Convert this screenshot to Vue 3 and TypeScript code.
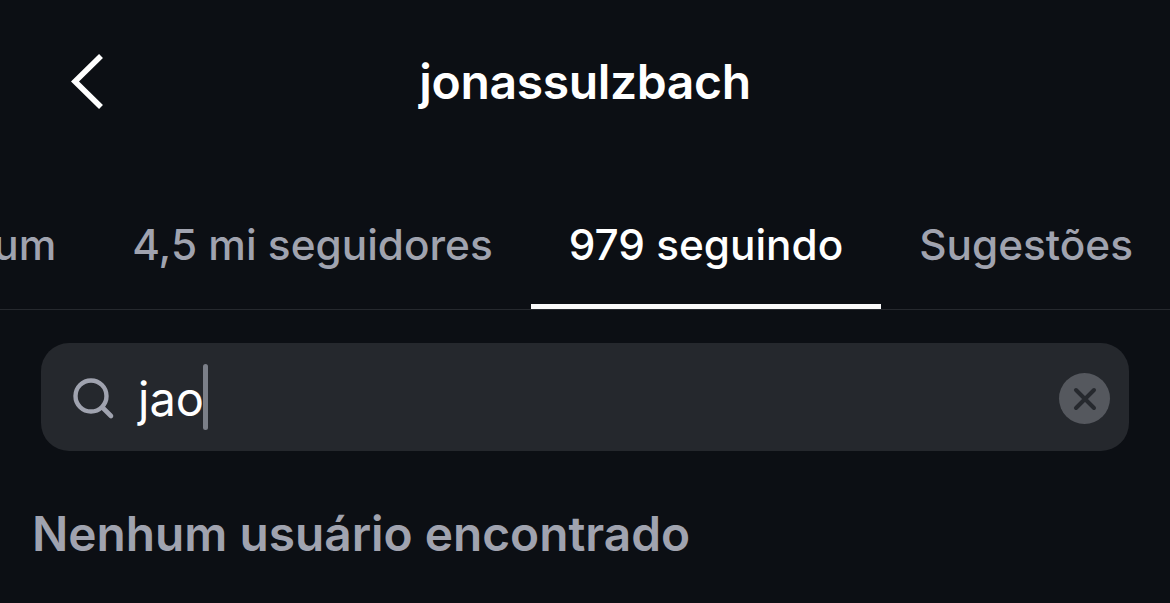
<script setup lang="ts">
const tabs = [
  { label: '12 em comum', active: false },
  { label: '4,5 mi seguidores', active: false },
  { label: '979 seguindo', active: true },
  { label: 'Sugestões', active: false },
]
</script>

<template>
  <div class="screen">
    <header class="top-bar">
      <button class="back-btn" aria-label="Voltar">
        <svg width="36" height="58" viewBox="0 0 36 58" fill="none">
          <path d="M31 3 L5 28.5 L31 54" stroke="#fff" stroke-width="5.6" />
        </svg>
      </button>
      <h1 class="title">jonassulzbach</h1>
    </header>

    <nav class="tabs">
      <div
        v-for="tab in tabs"
        :key="tab.label"
        class="tab"
        :class="{ 'tab--active': tab.active }"
      >
        {{ tab.label }}
      </div>
    </nav>

    <div class="search">
      <svg class="search__icon" width="42" height="42" viewBox="0 0 42 42" fill="none">
        <circle cx="18" cy="18" r="15.5" stroke="#a0a3af" stroke-width="4.4" />
        <path d="M29.5 29.5 L38 38" stroke="#a0a3af" stroke-width="4.6" stroke-linecap="round" />
      </svg>
      <span class="search__value">jao</span>
      <span class="search__caret"></span>
      <button class="search__clear" aria-label="Limpar">
        <svg width="24" height="24" viewBox="0 0 24 24" fill="none">
          <path d="M3 3 L21 21 M21 3 L3 21" stroke="#26292e" stroke-width="4" stroke-linecap="round" />
        </svg>
      </button>
    </div>

    <p class="empty">Nenhum usuário encontrado</p>
  </div>
</template>

<style>
html,
body {
  margin: 0;
  background: #0c0f14;
}
</style>

<style scoped>
.screen {
  width: 1170px;
  height: 603px;
  overflow: hidden;
  background: #0c0f14;
  font-family: Inter, "Liberation Sans", sans-serif;
  color: #fff;
}

.top-bar {
  height: 163px;
  padding-bottom: 2px;
  display: flex;
  align-items: center;
  justify-content: center;
  position: relative;
}

.back-btn {
  position: absolute;
  left: 70px;
  top: 53px;
  padding: 0;
  border: none;
  background: none;
  display: flex;
}

.title {
  margin: 0;
  font-size: 48px;
  font-weight: 600;
  letter-spacing: -0.35px;
}

.tabs {
  height: 144px;
  margin-right: -1px;
  display: flex;
  justify-content: flex-end;
  overflow: hidden;
  border-bottom: 1px solid #26292e;
}

.tab {
  flex: none;
  box-sizing: border-box;
  height: 144px;
  padding: 19px 38px 0;
  border-bottom: 5px solid transparent;
  display: flex;
  align-items: center;
  font-size: 42.3px;
  font-weight: 500;
  color: #a0a3af;
}

.tab--active {
  color: #fff;
  border-bottom-color: #fafafa;
}

.search {
  margin: 33px 41px 0;
  height: 108px;
  box-sizing: border-box;
  padding: 3px 19px 0 32px;
  display: flex;
  align-items: center;
  background: #25282d;
  border-radius: 28px;
}

.search__icon {
  flex: none;
}

.search__value {
  margin-left: 23px;
  font-size: 47px;
  font-weight: 400;
}

.search__caret {
  width: 5px;
  height: 66px;
  margin-left: -1px;
  margin-top: -3px;
  border-radius: 3px;
  background: #7b7f88;
}

.search__clear {
  margin-left: auto;
  width: 51px;
  height: 51px;
  padding: 0;
  border: none;
  border-radius: 50%;
  background: #55585e;
  display: flex;
  align-items: center;
  justify-content: center;
}

.empty {
  margin: 58px 0 0 32px;
  font-size: 47.8px;
  line-height: 50px;
  font-weight: 600;
  color: #a0a3af;
}
</style>
